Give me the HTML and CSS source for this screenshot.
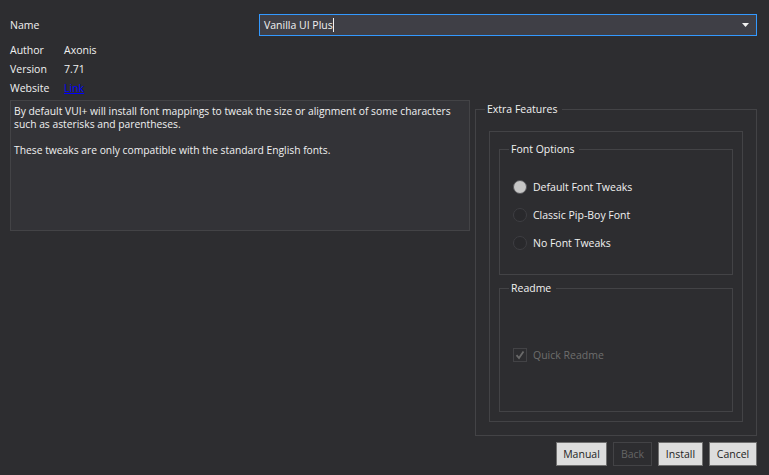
FILE: index.html
```html
<!DOCTYPE html>
<html>
<head>
<meta charset="utf-8">
<link rel="stylesheet" href="styles.css">
</head>
<body>
<div class="page">
  <div class="name-row">
    <span class="label">Name</span>
    <div class="combo">
      <span class="combo-text">Vanilla UI Plus</span><span class="caret"></span>
      <svg class="combo-arrow" width="7" height="4" viewBox="0 0 7 4"><path d="M0 0H7L3.5 4Z" fill="#f1f1f1"/></svg>
    </div>
  </div>
  <div class="info">
    <div class="info-row"><span class="label">Author</span><span class="value">Axonis</span></div>
    <div class="info-row"><span class="label">Version</span><span class="value">7.71</span></div>
    <div class="info-row"><span class="label">Website</span><a class="value link" href="#">Link</a></div>
  </div>
  <div class="main">
    <div class="description">
      <p>By default VUI+ will install font mappings to tweak the size or alignment of some characters such as asterisks and parentheses.</p>
      <p>These tweaks are only compatible with the standard English fonts.</p>
    </div>
    <fieldset class="group outer">
      <legend>Extra Features</legend>
      <div class="outer-body">
        <div class="panel">
          <fieldset class="group">
            <legend>Font Options</legend>
            <div class="radios">
              <div class="radio-row"><span class="radio checked"></span><span>Default Font Tweaks</span></div>
              <div class="radio-row"><span class="radio"></span><span>Classic Pip-Boy Font</span></div>
              <div class="radio-row"><span class="radio"></span><span>No Font Tweaks</span></div>
            </div>
          </fieldset>
          <fieldset class="group readme">
            <legend>Readme</legend>
            <div class="readme-body">
              <div class="check-row">
                <span class="checkbox"><svg width="12" height="12" viewBox="0 0 12 12"><path d="M2.5 6.2L5 9L9.5 2.5" fill="none" stroke="#6a6a6a" stroke-width="1.8"/></svg></span>
                <span class="check-label">Quick Readme</span>
              </div>
            </div>
          </fieldset>
        </div>
      </div>
    </fieldset>
  </div>
  <div class="buttons">
    <button class="btn manual">Manual</button>
    <button class="btn back" disabled>Back</button>
    <button class="btn install">Install</button>
    <button class="btn cancel">Cancel</button>
  </div>
</div>
</body>
</html>
```
FILE: styles.css
```css
html, body {
  margin: 0;
  padding: 0;
  background: #2d2d30;
}
body {
  font-family: "Open Sans", "Noto Sans", "DejaVu Sans", sans-serif;
  font-size: 10.5px;
  color: #f1f1f1;
  width: 769px;
  height: 475px;
  overflow: hidden;
}
.page {
  padding: 14px 12px 0 10px;
}
.name-row {
  display: flex;
  align-items: center;
  height: 22px;
}
.name-row .label {
  width: 249px;
}
.combo {
  flex: 1;
  height: 22px;
  box-sizing: border-box;
  border: 1px solid #3399ff;
  background: #3f3f46;
  display: flex;
  align-items: center;
  padding-left: 4px;
}
.combo-text {
  line-height: 14px;
}
.caret {
  display: inline-block;
  width: 1px;
  height: 14px;
  background: #f1f1f1;
}
.combo-arrow {
  margin-left: auto;
  margin-right: 7px;
}
.info {
  margin-top: 4px;
}
.info-row {
  display: flex;
  height: 19px;
  align-items: center;
}
.info-row .label {
  width: 54px;
}
.link {
  color: #0000ff;
  text-decoration: underline;
}
.main {
  display: flex;
  align-items: flex-start;
  margin-top: 3px;
}
.description {
  width: 460px;
  height: 131px;
  box-sizing: border-box;
  border: 1px solid #434346;
  background: #333337;
  padding: 4px 3px;
  line-height: 13px;
  margin-right: 5px;
  font-size: 10.3px;
}
.description p {
  margin: 0 0 13px 0;
}
fieldset.group {
  margin: 0;
  padding: 0;
  border: 1px solid #434346;
  min-width: 0;
}
fieldset.group legend {
  margin-left: 9px;
  padding: 0 5px 0 2px;
  line-height: 14px;
  height: 14px;
}
fieldset.group.outer {
  width: 282px;
  box-sizing: border-box;
  margin-top: 2px;
}
.outer-body {
  padding: 15px 13px 13px 13px;
}
.panel {
  border: 1px solid #434346;
  padding: 10px 9px 9px 9px;
}
.radios {
  padding: 17px 0 17px 13px;
}
.radio-row {
  display: flex;
  align-items: center;
  height: 28px;
}
.radio {
  width: 14px;
  height: 14px;
  box-sizing: border-box;
  border-radius: 50%;
  border: 1px solid #3e3e42;
  background: #29292c;
  margin-right: 6px;
}
.radio.checked {
  background: #c6c6c6;
  border-color: #56565a;
}
fieldset.group.readme {
  margin-top: 6px;
}
.readme-body {
  padding: 53px 0 49px 13px;
}
.check-row {
  display: flex;
  align-items: center;
  height: 14px;
}
.checkbox {
  width: 14px;
  height: 14px;
  box-sizing: border-box;
  border: 1px solid #434346;
  display: flex;
  align-items: center;
  justify-content: center;
  margin-right: 6px;
}
.check-label {
  color: #6d6d6d;
}
.buttons {
  display: flex;
  justify-content: flex-end;
  gap: 6px;
  margin-top: 6px;
}
.btn {
  font-family: inherit;
  font-size: 10.5px;
  height: 24px;
  box-sizing: border-box;
  border: 1px solid #707070;
  background: #dddddd;
  color: #1e1e1e;
  padding: 0;
  margin: 0;
}
.btn.manual { width: 51px; }
.btn.back {
  width: 39px;
  background: #2d2d30;
  border-color: #434346;
  color: #656565;
}
.btn.install { width: 45px; }
.btn.cancel { width: 48px; }
```
